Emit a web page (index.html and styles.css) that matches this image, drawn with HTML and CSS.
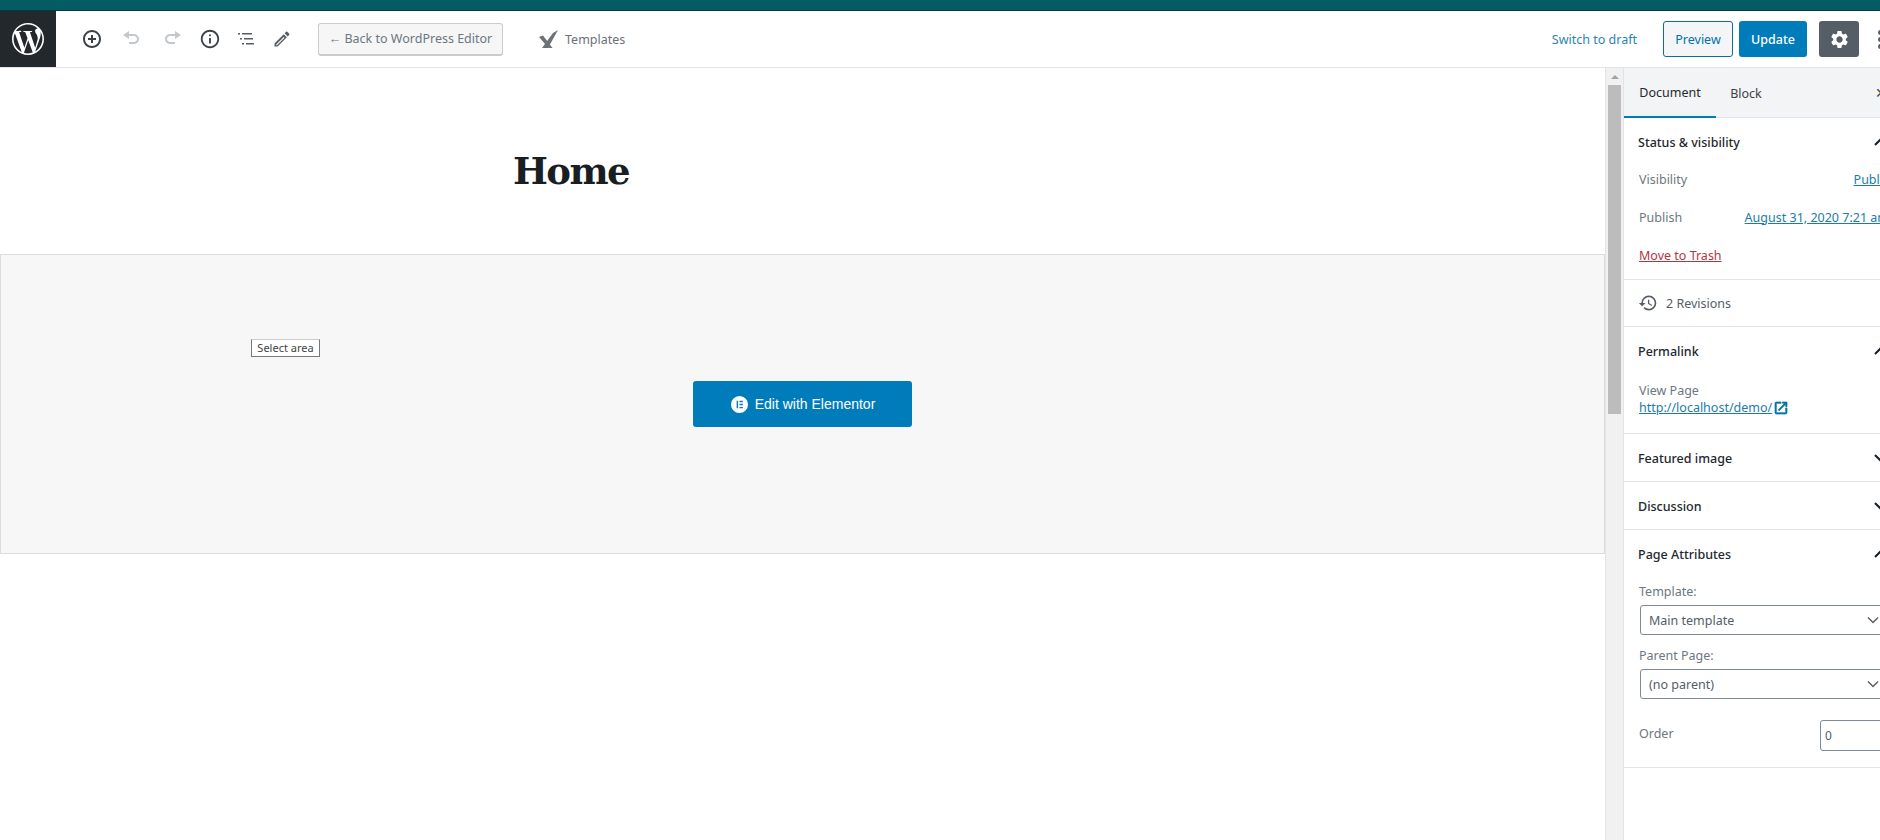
FILE: index.html
```html
<!DOCTYPE html>
<html lang="en">
<head>
<meta charset="UTF-8" />
<title>Edit Page - Home</title>
<link rel="stylesheet" href="styles.css">
</head>
<body>
<div class="app">
  <div class="topline"></div>

  <header class="toolbar">
    <a class="wp-logo">
      <svg viewBox="0 0 24 24" width="32" height="32"><path fill="#fff" d="M21.469 6.825c.84 1.537 1.318 3.3 1.318 5.175 0 3.979-2.156 7.456-5.363 9.325l3.295-9.527c.615-1.54.82-2.771.82-3.864 0-.405-.026-.78-.07-1.11m-7.981.105c.647-.03 1.232-.105 1.232-.105.582-.075.514-.93-.067-.899 0 0-1.755.135-2.88.135-1.064 0-2.85-.15-2.85-.15-.585-.03-.661.855-.075.885 0 0 .54.061 1.125.09l1.68 4.605-2.37 7.08L5.354 6.9c.649-.03 1.234-.1 1.234-.1.585-.075.516-.93-.065-.896 0 0-1.746.138-2.874.138-.2 0-.438-.008-.69-.015C4.911 3.15 8.235 1.215 12 1.215c2.809 0 5.365 1.072 7.286 2.833-.046-.003-.091-.009-.141-.009-1.06 0-1.812.923-1.812 1.914 0 .89.513 1.643 1.06 2.531.411.72.89 1.643.89 2.977 0 .915-.354 1.994-.821 3.479l-1.075 3.585-3.9-11.61.001.014zM12 22.784c-1.059 0-2.081-.153-3.048-.437l3.237-9.406 3.315 9.087c.024.053.05.101.078.149-1.12.393-2.325.609-3.582.609M1.211 12c0-1.564.336-3.05.935-4.39L7.29 21.709C3.694 19.96 1.212 16.271 1.211 12M12 0C5.385 0 0 5.385 0 12s5.385 12 12 12 12-5.385 12-12S18.615 0 12 0"/></svg>
    </a>

    <div class="tools">
      <span class="tool tool-add">
        <svg viewBox="0 0 20 20" width="20" height="20"><path d="M10 1c-5 0-9 4-9 9s4 9 9 9 9-4 9-9-4-9-9-9zm0 16c-3.900 0-7-3.100-7-7s3.100-7 7-7 7 3.100 7 7-3.100 7-7 7zm1-11H9v3H6v2h3v3h2v-3h3V9h-3V6z"/></svg>
      </span>
      <span class="tool tool-off">
        <svg viewBox="0 0 20 20" width="20" height="20"><path d="M12 5H7V2L1 6l6 4V7h5c1.660 0 3 1.340 3 3s-1.340 3-3 3H7v2h5c2.760 0 5-2.240 5-5s-2.240-5-5-5z"/></svg>
      </span>
      <span class="tool tool-off">
        <svg viewBox="0 0 20 20" width="20" height="20"><path d="M8 5h5V2l6 4-6 4V7H8c-1.660 0-3 1.340-3 3s1.340 3 3 3h5v2H8c-2.760 0-5-2.240-5-5s2.240-5 5-5z"/></svg>
      </span>
      <span class="tool tool-info">
        <svg viewBox="0 0 24 24" width="22" height="22"><path d="M12 2C6.480 2 2 6.480 2 12s4.480 10 10 10 10-4.480 10-10S17.520 2 12 2zm0 18c-4.410 0-8-3.590-8-8s3.590-8 8-8 8 3.590 8 8-3.590 8-8 8zM11 7h2v2h-2zM11 11h2v6h-2z"/></svg>
      </span>
      <span class="tool tool-soft">
        <svg viewBox="0 0 20 20" width="20" height="20"><path d="M2 4h2v1.500H2zM6 4h10v1.500H6zM4 9h2v1.500H4zM8 9h9v1.500H8zM6 14h2v1.500H6zM10 14h8v1.500h-8z"/></svg>
      </span>
      <span class="tool tool-soft">
        <svg viewBox="0 0 24 24" width="20" height="20"><path d="M3 17.250V21h3.750L17.810 9.940l-3.750-3.750L3 17.250zm2.920 2.330H5v-.920l9.060-9.060.920.920L5.920 19.580zM20.710 7.040c.390-.390.390-1.020 0-1.410l-2.340-2.340a1 1 0 00-1.410 0l-1.830 1.830 3.750 3.750 1.830-1.830z"/></svg>
      </span>
    </div>

    <button class="back-btn">← Back to WordPress Editor</button>

    <a class="templates">
      <svg viewBox="0 0 20 18" width="20" height="18"><path d="M20 0L10 18H4L15 3zM1 7L5 5.500 14.500 18H10.500z"/></svg>
      <span>Templates</span>
    </a>

    <div class="actions">
      <a class="switch-draft">Switch to draft</a>
      <button class="preview-btn">Preview</button>
      <button class="update-btn">Update</button>
      <button class="settings-btn">
        <svg viewBox="0 0 24 24" width="21" height="21"><path fill="#fff" d="M19.140 12.940c.040-.300.060-.610.060-.940 0-.320-.020-.640-.070-.940l2.030-1.580a.490.490 0 00.120-.610l-1.920-3.320a.488.488 0 00-.590-.220l-2.390.960c-.500-.380-1.030-.700-1.620-.940l-.360-2.540a.484.484 0 00-.480-.410h-3.840c-.240 0-.430.170-.470.410l-.360 2.540c-.590.240-1.130.570-1.620.940l-2.390-.960c-.220-.080-.470 0-.590.220L2.740 8.870c-.120.210-.080.470.120.610l2.030 1.580c-.050.300-.090.630-.090.940s.020.640.070.940l-2.030 1.580a.490.490 0 00-.120.610l1.920 3.320c.120.220.370.290.590.220l2.390-.960c.500.380 1.030.700 1.620.940l.360 2.540c.050.240.240.410.480.410h3.840c.240 0 .440-.170.470-.410l.360-2.540c.590-.240 1.130-.560 1.620-.940l2.390.960c.220.080.470 0 .590-.220l1.920-3.320c.120-.220.070-.470-.120-.610l-2.010-1.580zM12 15.600c-1.980 0-3.600-1.620-3.600-3.600s1.620-3.600 3.600-3.600 3.600 1.620 3.600 3.600-1.620 3.600-3.600 3.600z"/></svg>
      </button>
      <span class="kebab"><i></i><i></i><i></i></span>
    </div>
  </header>

  <div class="main">
    <main class="editor">
      <div class="title-row"><h1>Home</h1></div>
      <section class="elementor-block">
        <span class="select-area">Select area</span>
        <button class="elementor-btn">
          <svg viewBox="0 0 20 20" width="19" height="19"><path fill="#fff" fill-rule="evenodd" d="M10 1a9 9 0 100 18 9 9 0 000-18zM7 6h1.500v8H7zM10 6h3.500v1.500H10zM10 9.200h3.500v1.500H10zM10 12.500h3.500V14H10z"/></svg>
          Edit with Elementor
        </button>
      </section>
    </main>

    <div class="scrollbar">
      <span class="scroll-arrow"></span>
      <span class="scroll-thumb"></span>
    </div>

    <aside class="sidebar">
      <div class="tabs">
        <span class="tab tab-active">Document</span>
        <span class="tab">Block</span>
        <span class="tab-close">✕</span>
      </div>

      <section class="panel">
        <div class="panel-head">Status &amp; visibility
          <svg class="chev" viewBox="0 0 24 24" width="24" height="24"><path d="M6 15l6-6 6 6"/></svg>
        </div>
        <div class="status-body">
          <div class="status-row"><span class="muted">Visibility</span><a class="link">Public</a></div>
          <div class="status-row"><span class="muted">Publish</span><a class="link">August 31, 2020 7:21 am</a></div>
          <div class="status-row"><a class="trash">Move to Trash</a></div>
        </div>
      </section>

      <section class="panel revisions">
        <svg viewBox="0 0 24 24" width="20" height="20"><path d="M13 3a9 9 0 00-9 9H1l3.890 3.890.070.140L9 12H6c0-3.870 3.130-7 7-7s7 3.130 7 7-3.130 7-7 7c-1.930 0-3.680-.790-4.940-2.060l-1.420 1.420A8.954 8.954 0 0013 21a9 9 0 000-18zm-1 5v5l4.280 2.540.720-1.210-3.500-2.080V8H12z"/></svg>
        <span>2 Revisions</span>
      </section>

      <section class="panel">
        <div class="panel-head">Permalink
          <svg class="chev" viewBox="0 0 24 24" width="24" height="24"><path d="M6 15l6-6 6 6"/></svg>
        </div>
        <div class="permalink-body">
          <div class="muted">View Page</div>
          <div class="permalink-url">
            <a class="link">http://localhost/demo/</a>
            <svg class="ext-icon" viewBox="0 0 24 24" width="16" height="16"><path d="M19 19H5V5h7V3H5a2 2 0 00-2 2v14a2 2 0 002 2h14c1.100 0 2-.900 2-2v-7h-2v7zM14 3v2h3.590l-9.830 9.830 1.410 1.410L19 6.410V10h2V3h-7z"/></svg>
          </div>
        </div>
      </section>

      <section class="panel">
        <div class="panel-head">Featured image
          <svg class="chev" viewBox="0 0 24 24" width="24" height="24"><path d="M6 9l6 6 6-6"/></svg>
        </div>
      </section>

      <section class="panel">
        <div class="panel-head">Discussion
          <svg class="chev" viewBox="0 0 24 24" width="24" height="24"><path d="M6 9l6 6 6-6"/></svg>
        </div>
      </section>

      <section class="panel">
        <div class="panel-head">Page Attributes
          <svg class="chev" viewBox="0 0 24 24" width="24" height="24"><path d="M6 15l6-6 6 6"/></svg>
        </div>
        <div class="attr-body">
          <div class="attr-label muted">Template:</div>
          <div class="select">Main template
            <svg viewBox="0 0 12 8" width="12" height="8"><path d="M1 1.500l5 5 5-5"/></svg>
          </div>
          <div class="attr-label attr-label-second muted">Parent Page:</div>
          <div class="select">(no parent)
            <svg viewBox="0 0 12 8" width="12" height="8"><path d="M1 1.500l5 5 5-5"/></svg>
          </div>
          <div class="order-row">
            <span class="muted order-label">Order</span>
            <input class="order-input" type="text" value="0">
          </div>
        </div>
      </section>
    </aside>
  </div>
</div>
</body>
</html>
```

FILE: styles.css
```css
* {
  box-sizing: border-box;
}
html, body {
  margin: 0;
  height: 100%;
  overflow: hidden;
  background: #fff;
}
body {
  font-family: "Noto Sans", sans-serif;
  font-size: 12.5px;
  color: #555d66;
}
button {
  font-family: inherit;
  font-size: 12.5px;
  cursor: pointer;
}
.app {
  width: 1909px;
  height: 840px;
  display: flex;
  flex-direction: column;
}
.topline {
  height: 11px;
  flex: none;
  background: #055b63;
  border-bottom: 1px solid #04393f;
}

/* Top toolbar */
.toolbar {
  height: 57px;
  flex: none;
  display: flex;
  align-items: center;
  background: #fff;
  border-bottom: 1px solid #e2e4e7;
}
.wp-logo {
  width: 56px;
  height: 56px;
  flex: none;
  display: flex;
  align-items: center;
  justify-content: center;
  background: #23282d;
}
.tools {
  display: flex;
  align-items: center;
  margin-left: 18px;
}
.tool {
  width: 36px;
  height: 36px;
  display: flex;
  align-items: center;
  justify-content: center;
  fill: #3d4249;
}
.tool-off {
  margin-left: 4px;
  fill: #c5c8cb;
}
.tool-info {
  margin-left: 2px;
}
.tool-soft {
  fill: #555d66;
}
.back-btn {
  width: 185px;
  height: 33px;
  margin-left: 18px;
  padding: 0;
  color: #6c7781;
  background: #f6f6f6;
  border: 1px solid #c9cbce;
  border-bottom-width: 2px;
  border-radius: 3px;
}
.templates {
  display: flex;
  align-items: center;
  gap: 7px;
  margin-left: 35px;
  fill: #6d7278;
  color: #6d7278;
}
.actions {
  display: flex;
  align-items: center;
  margin-left: auto;
  padding-right: 8px;
}
.switch-draft {
  margin-right: 26px;
  color: #2b85b0;
}
.preview-btn {
  width: 70px;
  height: 36px;
  color: #0073aa;
  background: #f3f5f6;
  border: 1px solid #0e6f96;
  border-radius: 3px;
}
.update-btn {
  width: 68px;
  height: 36px;
  margin-left: 6px;
  color: #fff;
  font-weight: 500;
  background: #007cba;
  border: 0;
  border-radius: 3px;
}
.settings-btn {
  width: 40px;
  height: 36px;
  margin-left: 12px;
  padding: 0;
  display: flex;
  align-items: center;
  justify-content: center;
  background: #555d66;
  border: 0;
  border-radius: 3px;
}
.kebab {
  width: 42px;
  display: flex;
  flex-direction: column;
  align-items: center;
  gap: 2px;
}
.kebab i {
  width: 5px;
  height: 5px;
  border-radius: 50%;
  background: #555d66;
}

.main {
  flex: 1;
  min-height: 0;
  display: flex;
}

/* Editor canvas */
.editor {
  width: 1605px;
  flex: none;
}
.title-row {
  height: 186px;
  display: flex;
  align-items: center;
  padding: 20px 0 0 513px;
}
.title-row h1 {
  margin: 0;
  font-family: "DejaVu Serif", serif;
  font-size: 37px;
  font-weight: 700;
  letter-spacing: -1.6px;
  color: #191e23;
}
.elementor-block {
  position: relative;
  height: 300px;
  display: flex;
  align-items: center;
  justify-content: center;
  background: #f7f7f7;
  border: 1px solid #dcdcde;
}
.select-area {
  position: absolute;
  left: 250px;
  top: 84px;
  width: 69px;
  height: 18px;
  line-height: 16px;
  text-align: center;
  font-size: 11px;
  color: #444;
  background: #fff;
  border: 1px solid #777;
  border-top-color: #ccc;
}
.elementor-btn {
  width: 219px;
  height: 46px;
  display: flex;
  align-items: center;
  justify-content: center;
  gap: 6px;
  font-family: "Liberation Sans", Arial, sans-serif;
  font-size: 14px;
  color: #fff;
  background: #007cba;
  border: 0;
  border-radius: 3px;
}

/* Fake scrollbar track */
.scrollbar {
  width: 18px;
  flex: none;
  display: flex;
  flex-direction: column;
  align-items: center;
  background: #f1f1f1;
  border-left: 1px solid #e2e4e7;
}
.scroll-arrow {
  width: 0;
  height: 0;
  margin-top: 7px;
  border-left: 4px solid transparent;
  border-right: 4px solid transparent;
  border-bottom: 4px solid #a3a3a3;
}
.scroll-thumb {
  width: 13px;
  height: 329px;
  margin-top: 6px;
  background: #bcbcbc;
}

/* Right sidebar */
.sidebar {
  width: 286px;
  flex: none;
  background: #fff;
  border-left: 1px solid #e2e4e7;
}
.tabs {
  height: 50px;
  display: flex;
  align-items: stretch;
  background: #f3f4f5;
  border-bottom: 1px solid #e2e4e7;
}
.tab {
  display: flex;
  align-items: center;
  justify-content: center;
  padding-top: 1px;
  color: #3d4249;
}
.tab:first-child {
  width: 92px;
}
.tab:nth-child(2) {
  width: 60px;
}
.tab-active {
  color: #23282d;
  border-bottom: 2px solid #007cba;
  margin-bottom: -1px;
}
.tab-close {
  display: flex;
  align-items: center;
  margin-left: 99px;
  font-size: 14px;
  color: #3d4249;
}
.panel {
  border-bottom: 1px solid #e2e4e7;
}
.panel-head {
  height: 47px;
  display: flex;
  align-items: center;
  justify-content: space-between;
  padding: 1px 16px 0 14px;
  font-weight: 500;
  color: #23282d;
}
.chev {
  fill: none;
  stroke: #191e23;
  stroke-width: 2;
}
.muted {
  color: #6c7781;
}
.link {
  color: #1c7ca8;
  text-decoration: underline;
}
.status-body {
  padding: 2px 20px 12px 15px;
  display: flex;
  flex-direction: column;
  gap: 14px;
}
.status-row {
  height: 24px;
  display: flex;
  align-items: center;
  justify-content: space-between;
}
.trash {
  color: #b3363c;
  text-decoration: underline;
}
.revisions {
  height: 47px;
  display: flex;
  align-items: center;
  gap: 8px;
  padding-left: 14px;
  fill: #555d66;
  color: #555d66;
}
.permalink-body {
  padding: 8px 16px 17px 15px;
  line-height: 17px;
}
.permalink-url {
  display: flex;
  align-items: center;
  gap: 1px;
}
.ext-icon {
  fill: #0073aa;
  stroke: #0073aa;
  stroke-width: 1;
}
.attr-body {
  padding: 5px 16px 16px 15px;
}
.attr-label {
  height: 20px;
  line-height: 20px;
  margin-bottom: 3px;
}
.attr-label-second {
  margin-top: 11px;
}
.select {
  height: 30px;
  margin-left: 1px;
  display: flex;
  align-items: center;
  justify-content: space-between;
  padding: 0 13px 0 8px;
  color: #555d66;
  background: #fff;
  border: 1px solid #7e8993;
  border-radius: 3px;
}
.select svg {
  fill: none;
  stroke: #555d66;
  stroke-width: 1.500;
}
.order-row {
  margin-top: 21px;
  display: flex;
  align-items: flex-start;
  justify-content: space-between;
}
.order-label {
  margin-top: 5px;
}
.order-input {
  width: 73px;
  height: 31px;
  padding: 0 4px;
  font-family: inherit;
  font-size: 12px;
  color: #555d66;
  border: 1px solid #7e8993;
  border-radius: 3px;
}
```
